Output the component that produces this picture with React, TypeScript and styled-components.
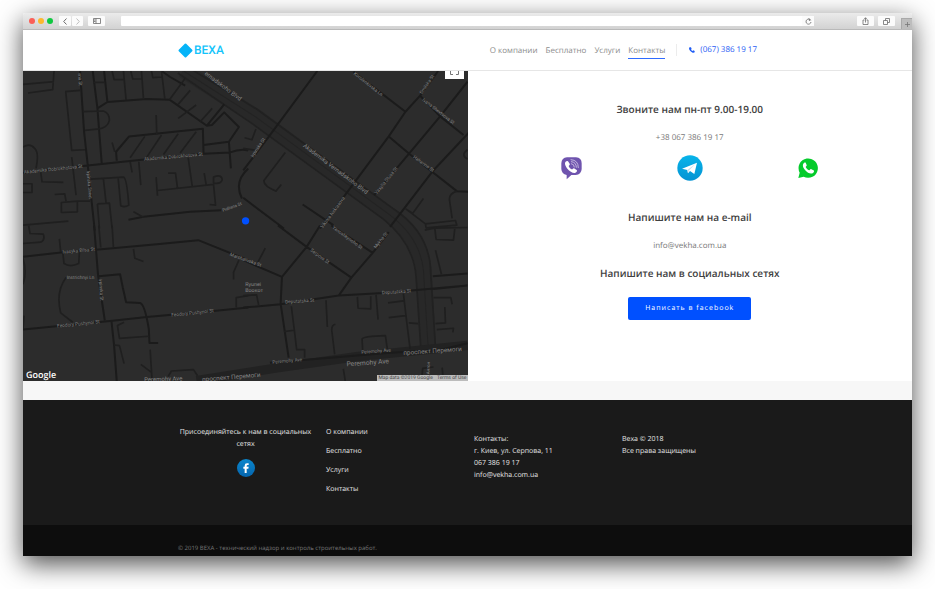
import React from "react";
import styled, { createGlobalStyle } from "styled-components";

const GlobalStyle = createGlobalStyle`
  *, *::before, *::after { box-sizing: border-box; }
  body {
    margin: 0;
    background: #fff;
    font-family: "Open Sans", "Noto Sans", sans-serif;
    text-rendering: geometricPrecision;
  }
  button, input { text-rendering: inherit; }
  a { color: inherit; text-decoration: none; }
  h2, p, ul { margin: 0; padding: 0; }
  ul { list-style: none; }
`;

/* ---------- Browser window ---------- */

const Desktop = styled.div`
  padding: 13px 23px 33px;
`;

const BrowserWindow = styled.div`
  background: #fff;
  border-radius: 2px 2px 0 0;
  box-shadow: 0 8px 26px rgba(0, 0, 0, 0.7);
`;

const Toolbar = styled.div`
  display: flex;
  align-items: center;
  height: 17px;
  padding-left: 6px;
  border-radius: 2px 2px 0 0;
  border-bottom: 1px solid #b9b9b9;
  background: linear-gradient(#ebebeb, #d2d2d2);
`;

const Lights = styled.div`
  display: flex;
  gap: 3px;
  margin-right: 6px;
`;

const Light = styled.span<{ $color: string }>`
  width: 6px;
  height: 6px;
  border-radius: 50%;
  background: ${(p) => p.$color};
`;

const ToolButton = styled.button<{ $width: number; $muted?: boolean }>`
  display: flex;
  align-items: center;
  justify-content: center;
  width: ${(p) => p.$width}px;
  height: 10px;
  padding: 0;
  border: 0;
  border-radius: 1px;
  background: #fbfbfb;
  color: ${(p) => (p.$muted ? "#bdbdbd" : "#6c6c6c")};
  svg {
    display: block;
    fill: none;
    stroke: currentColor;
  }
`;

const ButtonPair = styled.div`
  display: flex;
  gap: 1px;
  margin-right: 5px;
`;

const AddressBar = styled.div`
  display: flex;
  align-items: center;
  flex: 1;
  height: 10px;
  margin: 0 43px 0 16px;
  border-radius: 1px;
  background: #fff;
`;

const AddressInput = styled.input`
  flex: 1;
  min-width: 0;
  height: 10px;
  padding: 0 4px;
  border: 0;
  outline: 0;
  background: transparent;
  font: 7px "Open Sans", sans-serif;
`;

const ToolGroup = styled.div`
  display: flex;
  gap: 4px;
  margin-right: 6px;
`;

const NewTab = styled.button`
  display: flex;
  align-items: center;
  justify-content: center;
  align-self: flex-end;
  width: 11px;
  height: 11px;
  padding: 0;
  border: 1px solid #a9a9a9;
  border-width: 1px 0 0 1px;
  background: #bdbdbd;
  svg {
    stroke: #777;
  }
`;

/* ---------- Site header ---------- */

const Container = styled.div`
  width: 100%;
  max-width: 579px;
  margin: 0 auto;
`;

const Header = styled.header`
  border-bottom: 1px solid #e6e6e6;
  background: #fff;
`;

const HeaderRow = styled(Container)`
  display: flex;
  align-items: center;
  justify-content: space-between;
  height: 40px;
`;

const Logo = styled.a`
  display: flex;
  align-items: center;
  gap: 1px;
  color: #14c4fb;
  font: 500 12px/16px Roboto, sans-serif;
`;

const Nav = styled.nav`
  display: flex;
  align-items: center;
  gap: 8px;
`;

const NavLink = styled.a<{ $active?: boolean }>`
  padding: 3px 0 1px;
  border-bottom: 1px solid ${(p) => (p.$active ? "#2f6bff" : "transparent")};
  color: #8c8c8c;
  font-size: 8px;
  line-height: 12px;
`;

const Phone = styled.a`
  display: flex;
  align-items: center;
  gap: 5px;
  margin-left: 3px;
  padding-left: 12px;
  border-left: 1px solid #ececec;
  color: #1f5cf5;
  font-size: 8px;
  line-height: 12px;
`;

/* ---------- Main ---------- */

const Main = styled.main`
  display: grid;
  grid-template-columns: 1fr 1fr;
  min-height: 310px;
`;

const MapPanel = styled.section`
  position: relative;
  overflow: hidden;
  background: #2c2c2c;
`;

const MapDrawing = styled.svg`
  position: absolute;
  inset: 0;
  width: 100%;
  height: 100%;
  font-family: Roboto, sans-serif;
`;

const FullscreenButton = styled.button`
  position: absolute;
  top: 0;
  right: 4px;
  display: flex;
  justify-content: center;
  width: 19px;
  height: 8px;
  padding: 0;
  border: 0;
  background: #fff;
`;

const GoogleMark = styled.span`
  position: absolute;
  left: 3px;
  bottom: 0;
  color: #fff;
  font: 600 9px/13px "Open Sans", sans-serif;
`;

const MapCredits = styled.div`
  position: absolute;
  right: 0;
  bottom: 0;
  display: flex;
  gap: 4px;
  padding: 0 1px;
  background: #bcbcbc;
  color: #444;
  font: 5px/6px Roboto, sans-serif;
`;

const Contacts = styled.section`
  display: flex;
  flex-direction: column;
  align-items: center;
  padding: 28px 0 20px;
  text-align: center;
`;

const Title = styled.h2`
  color: #404040;
  font-size: 10px;
  font-weight: 600;
  line-height: 20px;
`;

const Detail = styled.a`
  margin: 11px 0 9px;
  color: #777;
  font-size: 8px;
  line-height: 16px;
`;

const Messengers = styled.div`
  display: grid;
  grid-template-columns: repeat(3, 1fr);
  align-items: center;
  justify-items: center;
  width: 80%;
  height: 26px;
  margin-bottom: 26px;
  a, svg { display: block; }
`;

const FacebookButton = styled.button`
  margin-top: 14px;
  width: 123px;
  height: 23px;
  padding: 0;
  border: 0;
  border-radius: 2px;
  background: #0050ff;
  color: #fff;
  font: 500 7px/12px "Open Sans", sans-serif;
  letter-spacing: 1px;
`;

const Strip = styled.div`
  height: 19px;
  background: #f7f7f7;
`;

/* ---------- Footer ---------- */

const Footer = styled.footer`
  background: #1a1a1a;
  color: #e4e4e4;
  font-size: 7px;
  line-height: 12px;
`;

const FooterGrid = styled(Container)`
  display: grid;
  grid-template-columns: repeat(4, 1fr);
  column-gap: 13px;
  min-height: 125px;
  padding-top: 27px;
`;

const SocialColumn = styled.div`
  display: flex;
  flex-direction: column;
  align-items: center;
  gap: 8px;
  text-align: center;
`;

const FacebookCircle = styled.a`
  display: flex;
  align-items: center;
  justify-content: center;
  width: 18px;
  height: 18px;
  border-radius: 50%;
  background: linear-gradient(#0a86cc, #0565ae);
  color: #fff;
`;

const FooterLinks = styled.ul`
  display: grid;
  align-content: start;
  row-gap: 7px;
  li { height: 12px; }
  a { display: block; }
`;

const FooterText = styled.div`
  padding-top: 7px;
  p, a { display: block; }
`;

const Legal = styled.div`
  padding: 17px 0 2px;
  background: #0d0d0d;
  color: #777;
  font-size: 6px;
`;

/* ---------- Map data ---------- */

type Label = [x: number, y: number, angle: number, text: string, size?: number];

interface Tile {
  x: number;
  y: number;
  roads: string;
  lanes: string;
  labels: Label[];
}

const tiles: Tile[] = [
  {
    x: -9,
    y: -6,
    roads:
      "M180 8L192 190L203 290L224 486 M218 8L232 120L245 286 M9 314L203 291L400 270L550 256L630 252Q660 240 684 246 M290 277L288 250L327 204L548 181L550 254 M262 101L380 92L448 94L560 172L612 108 M424 8L450 26L495 52 M232 120L262 101L252 8 M560 172L575 170L612 132L656 176L626 220L550 230 M626 220L632 300 M603 425L510 430L370 445L325 454 M684 300Q640 340 665 390",
    lanes:
      "M9 48L102 40 M24 74L98 64L102 8 M135 70L180 66 M137 70L155 246L195 244 M188 130L250 128Q268 134 268 156Q262 180 232 182L194 186 M220 42L252 42 M276 8L282 34L312 34 M310 8L318 96 M332 8L338 32L364 32 M364 8L370 92 M394 8L398 28L424 26 M424 8L434 92 M495 30L448 94 M510 66L474 108 M528 110L474 150 M576 120L540 160 M408 140L410 200 M374 204L330 268 M424 200L380 266 M474 196L430 258 M528 190L480 254 M276 222L284 250 M9 236Q30 222 44 240Q58 254 48 300 M62 310L66 340L130 342 M155 266L168 380 M9 346L36 346L36 372L9 372 M104 378L134 376L138 398 M124 402L172 398L172 430L124 432Z M172 398L210 398 M212 332L310 326Q320 328 326 410Q314 418 302 412L294 328 M250 332L258 404 M356 280L362 350 M330 280L336 312 M408 326L412 382 M412 366L580 348 M444 314L466 314L472 360 M504 268L516 352 M552 314L558 350 M580 326Q604 316 606 334Q602 348 580 344Z M580 348L586 410L568 408 M232 406L268 404L276 480 M232 406L238 480 M340 430L370 446 M9 470L145 458",
    labels: [
      [12, 316, -6, "Akademika Dobrokhotova St", 14],
      [372, 277, -5, "Akademika Dobrokhotova St", 14],
      [174, 14, 86, "vna St", 14],
      [200, 308, 85, "Irpinska Street", 13],
      [608, 430, -20, "Pidlisna St", 13],
      [552, 18, 37, "ernadskoho Blvd", 18],
    ],
  },
  {
    x: 660,
    y: -6,
    roads:
      "M222 8L80 200L0 306 M330 10L486 130 M584 8L530 82L486 130L436 204L320 360L230 480 M530 82L590 144L660 200 M672 40L590 144L500 252L392 380 M436 204L500 258L566 310L640 368L684 370 M684 184L566 310L440 475 M178 408L270 470 M0 388L122 480",
    lanes:
      "M0 240L40 246 M4 208L26 214L38 182 M126 252L62 336Q60 352 98 368L114 348 M540 390L508 434L488 422L546 466L636 456L640 470L548 478L546 466 M640 368Q616 376 618 394L626 450 M672 244Q650 260 672 272",
    labels: [
      [330, 18, 38, "Korolenkivska Ln", 14],
      [536, 78, -56, "Smilska St", 14],
      [536, 96, 38, "Ivana Shevtsova St", 14],
      [508, 268, 36, "Haharina St", 14],
      [30, 268, -57, "Irpinska St", 14],
      [178, 234, 37, "Akademika Vernadskoho Blvd", 18],
      [400, 378, -51, "Vasylia Stusa St", 14],
      [238, 480, -54, "Viktora Nekrasova", 14],
    ],
  },
  {
    x: -9,
    y: 465,
    roads:
      "M222 0L234 150L254 284 M9 94L130 80L236 72L410 56L534 44L684 104 M9 312L270 286L380 274L580 256L684 246 M274 286L282 360L290 468 M236 152L300 146L308 186L318 230L360 232Q374 236 386 310L388 352L414 352",
    lanes:
      "M26 0L30 24L70 26Q76 44 62 50L9 54 M118 40L122 80 M128 80L132 114Q150 126 176 114L178 80 M138 156Q106 200 122 262L158 290 M9 98Q22 140 9 176 M340 70L344 98L370 108 M312 290L292 300L298 338L386 332 M282 358L298 360L312 414 M390 372L396 468 M362 416L394 440 M236 0L242 66 M276 0L280 66 M656 104L640 140L640 162 M648 246L648 216L684 210 M444 452L454 436L520 432L532 450 M9 310L12 270",
    labels: [
      [128, 84, -5, "Ivasyka Bilsa St", 14],
      [140, 159, 0, "Instrichnyi Ln", 14],
      [236, 160, 86, "Irpinska St", 14],
      [112, 306, -6, "Feodory Pushynoi St", 14],
      [454, 273, -6, "Feodory Pushynoi St", 14],
      [628, 90, 20, "Marshalivska St", 14],
      [372, 468, -2, "Peremohy Ave", 18],
      [546, 468, -5, "проспект Перемоги", 19],
    ],
  },
  {
    x: 660,
    y: 465,
    roads:
      "M104 0L190 64L324 156L388 82L264 0 M230 0L190 64L116 154L112 234L136 396 M0 104L116 154 M0 246L112 236L286 210L420 202L672 180 M324 156L286 210 M388 82L436 20 M568 152L672 144 M570 190L672 180",
    lanes:
      "M66 68L44 110 M0 210L40 208L46 238 M144 242L154 320L160 372L184 372L184 396 M122 318L152 314 M248 224L252 304 M276 296Q262 300 266 320L274 386 M342 214L344 248L382 250L382 212 M398 208L404 282 M358 376L356 340Q360 332 426 330L432 372 M480 204L490 290L500 370 M434 232L480 226 M436 276L486 270 M496 292L524 294 M576 74L594 146 M574 8L578 42L630 44L634 8 M544 14L572 8L672 6 M570 216L622 216L626 236 M604 244L606 292L576 294 M580 312L630 308L628 320 M300 430L306 468 M534 464L538 428L570 424 M596 426L600 468",
    labels: [
      [266, 8, 36, "Yanoshkynoho St", 14],
      [200, 76, 36, "Serpova St", 14],
      [398, 70, -52, "Mykha St", 14],
      [126, 234, -4, "Deputatska St", 14],
      [416, 206, -4, "Deputatska St", 14],
      [88, 414, -5, "Peremohy Ave", 14],
      [354, 384, -4, "Peremohy Ave", 14],
      [310, 422, -4, "Peremohy Ave", 20],
      [480, 388, -4, "проспект Перемоги", 19],
      [6, 182, 0, "Ryunei", 16],
      [6, 199, 0, "Воокот", 16],
      [558, 446, -88, "Антон", 13],
    ],
  },
];

const CityMap = () => (
  <MapDrawing viewBox="0 0 1332 933" preserveAspectRatio="xMidYMid slice" role="img" aria-label="Карта">
    <rect width="1332" height="933" fill="#2c2c2c" />
    <g fill="none" strokeLinejoin="round">
      <path d="M480 0L700 140L1095 430Q1190 500 1202 600L1214 830" stroke="#282828" strokeWidth="46" />
      <path
        d="M490 -12L700 116L1110 415Q1208 480 1220 580L1236 830 M464 8L690 162L1080 446Q1172 520 1178 620L1192 830"
        stroke="#212121"
        strokeWidth="5"
      />
      <path d="M478 0L698 140L1095 430Q1190 500 1200 600L1214 830" stroke="#232323" strokeWidth="3" />
      <path d="M520 930L760 892L1000 858L1332 824" stroke="#222" strokeWidth="28" />
      <path d="M740 876L1100 846L1250 838L1332 818" stroke="#1b1b1b" strokeWidth="6" />
    </g>
    {tiles.map((tile) => (
      <g key={`${tile.x}:${tile.y}`} transform={`translate(${tile.x} ${tile.y})`}>
        <path d={tile.roads} fill="none" stroke="#1b1b1b" strokeWidth="6" strokeLinejoin="round" />
        <path d={tile.lanes} fill="none" stroke="#1f1f1f" strokeWidth="5" strokeLinejoin="round" />
      </g>
    ))}
    {tiles.map((tile) => (
      <g key={`${tile.x}:${tile.y}`} transform={`translate(${tile.x} ${tile.y})`} fill="#858585">
        {tile.labels.map(([x, y, angle, text, size]) => (
          <text key={`${x}:${y}`} fontSize={size} transform={`translate(${x} ${y}) rotate(${angle})`}>
            {text}
          </text>
        ))}
      </g>
    ))}
    <circle cx="667" cy="451" r="11" fill="#0050ff" />
  </MapDrawing>
);

const TelegramIcon = () => (
  <svg width="26" height="26" viewBox="0 0 78 78">
    <defs>
      <linearGradient id="telegram" x1="0" y1="0" x2="0" y2="1">
        <stop offset="0" stopColor="#08b4ea" />
        <stop offset="1" stopColor="#0493d3" />
      </linearGradient>
    </defs>
    <circle cx="39" cy="39" r="38" fill="url(#telegram)" />
    <path d="M15 41L60 23L52 57L39 48L33 55L31 45Z" fill="#fff" />
    <path d="M31 45L55 27L35 47L33 55Z" fill="#c4dfee" />
  </svg>
);

const WhatsAppIcon = () => (
  <svg width="20" height="20" viewBox="0 0 60 60">
    <path d="M1 60L5 44A29 29 0 1 1 17 56Z" fill="#05cb2b" />
    <path
      d="M19 14C13 18 13 26 21 36C30 46 39 50 46 44C49 41 49 38 46 37L39 33C37 32 35 37 33 37C29 35 25 31 23 27C24 25 27 23 26 21L23 14Q21 12 19 14Z"
      fill="#fff"
    />
  </svg>
);

const ViberIcon = () => (
  <svg width="21" height="23" viewBox="0 0 63 69">
    <path
      d="M18 1H45Q62 2 62 19V36Q61 53 44 54H31L17 67V54Q2 51 1 36V19Q2 2 18 1Z"
      fill="#6f54ae"
    />
    <path
      d="M16 13C9 17 12 26 19 35C26 43 35 49 42 48C47 46 50 41 47 39L39 34C36 33 35 38 32 37C28 35 24 31 23 27C24 25 28 23 26 20L21 13Q19 11 16 13Z"
      fill="#fff"
    />
    <path d="M31 20Q40 21 40 30 M31 14Q46 15 46 31 M30 8Q52 9 52 32" fill="none" stroke="#c3b6df" strokeWidth="3" strokeLinecap="round" />
  </svg>
);

const FacebookGlyph = () => (
  <svg width="6" height="10" viewBox="0 0 18 30">
    <path d="M5 30V17H1V11H5V8Q5 1 12 1H17V6H14Q11 6 11 9V11H17L16 17H11V30Z" fill="currentColor" />
  </svg>
);

const footerLinks = ["О компании", "Бесплатно", "Услуги", "Контакты"];

export default function App() {
  return (
    <>
      <GlobalStyle />
      <Desktop>
        <BrowserWindow>
          <Toolbar>
            <Lights>
              <Light $color="#fb5f57" />
              <Light $color="#fcb82e" />
              <Light $color="#0fc840" />
            </Lights>
            <ButtonPair>
              <ToolButton $width={12} aria-label="Назад">
                <svg width="4" height="7" viewBox="0 0 4 7"><path d="M3.5 .5L.7 3.5L3.5 6.5" /></svg>
              </ToolButton>
              <ToolButton $width={11} $muted aria-label="Вперёд">
                <svg width="4" height="7" viewBox="0 0 4 7"><path d="M.5 .5L3.3 3.5L.5 6.5" /></svg>
              </ToolButton>
            </ButtonPair>
            <ToolButton $width={17} aria-label="Боковая панель">
              <svg width="8" height="6" viewBox="0 0 8 6"><path d="M.5 .5H7.5V5.5H.5Z M3 .5V5.5 M1 2H2.5 M1 3.5H2.5" strokeWidth=".8" /></svg>
            </ToolButton>
            <AddressBar>
              <AddressInput type="text" aria-label="Адрес" />
              <ToolButton $width={12} aria-label="Обновить">
                <svg width="7" height="7" viewBox="0 0 14 14"><path d="M11.5 5A5 5 0 1 0 12 8 M7 1L10.5 3L8 6" strokeWidth="1.6" /></svg>
              </ToolButton>
            </AddressBar>
            <ToolGroup>
              <ToolButton $width={17} aria-label="Поделиться">
                <svg width="7" height="8" viewBox="0 0 14 16"><path d="M5 6H2V15H12V6H9 M7 11V1.5 M4.5 4L7 1.5L9.5 4" strokeWidth="1.6" /></svg>
              </ToolButton>
              <ToolButton $width={17} aria-label="Вкладки">
                <svg width="7" height="7" viewBox="0 0 14 14"><path d="M1 5H9V13H1Z M5 5V1H13V9H9" strokeWidth="1.6" /></svg>
              </ToolButton>
            </ToolGroup>
            <NewTab aria-label="Новая вкладка">
              <svg width="5" height="5" viewBox="0 0 5 5"><path d="M2.5 0V5 M0 2.5H5" strokeWidth=".8" /></svg>
            </NewTab>
          </Toolbar>

          <Header>
            <HeaderRow>
              <Logo href="#">
                <svg width="15" height="15" viewBox="0 0 30 30">
                  <path d="M15 3L27 15L15 27L3 15Z" fill="#06b4f8" stroke="#06b4f8" strokeWidth="4" strokeLinejoin="round" />
                </svg>
                ВЕХА
              </Logo>
              <Nav>
                <NavLink href="#about">О компании</NavLink>
                <NavLink href="#free">Бесплатно</NavLink>
                <NavLink href="#services">Услуги</NavLink>
                <NavLink href="#contacts" $active>Контакты</NavLink>
                <Phone href="tel:+380673861917">
                  <svg width="6" height="6" viewBox="0 0 18 18">
                    <path d="M2 1L6 1L8 6L6 8Q8 11 11 12L13 10L17 12V16Q15 18 11 17Q1 13 0 4Q0 2 2 1Z" fill="currentColor" />
                  </svg>
                  (067) 386 19 17
                </Phone>
              </Nav>
            </HeaderRow>
          </Header>

          <Main>
            <MapPanel>
              <CityMap />
              <FullscreenButton aria-label="На весь экран">
                <svg width="9" height="4" viewBox="0 0 9 4">
                  <path d="M.5 0V3.5H3 M8.5 0V3.5H6" fill="none" stroke="#777" />
                </svg>
              </FullscreenButton>
              <GoogleMark>Google</GoogleMark>
              <MapCredits>
                <span>Map data ©2019 Google</span>
                <a href="#terms">Terms of Use</a>
              </MapCredits>
            </MapPanel>
            <Contacts>
              <Title>Звоните нам пн-пт 9.00-19.00</Title>
              <Detail href="tel:+380673861917">+38 067 386 19 17</Detail>
              <Messengers>
                <a href="#viber" aria-label="Viber"><ViberIcon /></a>
                <a href="#telegram" aria-label="Telegram"><TelegramIcon /></a>
                <a href="#whatsapp" aria-label="WhatsApp"><WhatsAppIcon /></a>
              </Messengers>
              <Title>Напишите нам на e-mail</Title>
              <Detail href="mailto:info@vekha.com.ua">info@vekha.com.ua</Detail>
              <Title>Напишите нам в социальных сетях</Title>
              <FacebookButton>Написать в facebook</FacebookButton>
            </Contacts>
          </Main>

          <Strip />

          <Footer>
            <FooterGrid>
              <SocialColumn>
                <p>Присоединяйтесь к нам в социальных сетях</p>
                <FacebookCircle href="#facebook" aria-label="Facebook">
                  <FacebookGlyph />
                </FacebookCircle>
              </SocialColumn>
              <FooterLinks>
                {footerLinks.map((text) => (
                  <li key={text}><a href="#page">{text}</a></li>
                ))}
              </FooterLinks>
              <FooterText>
                <p>Контакты:</p>
                <p>г. Киев, ул. Серпова, 11</p>
                <a href="tel:0673861917">067 386 19 17</a>
                <a href="mailto:info@vekha.com.ua">info@vekha.com.ua</a>
              </FooterText>
              <FooterText>
                <p>Веха © 2018</p>
                <p>Все права защищены</p>
              </FooterText>
            </FooterGrid>
            <Legal>
              <Container>© 2019 ВЕХА - технический надзор и контроль строительных работ.</Container>
            </Legal>
          </Footer>
        </BrowserWindow>
      </Desktop>
    </>
  );
}
